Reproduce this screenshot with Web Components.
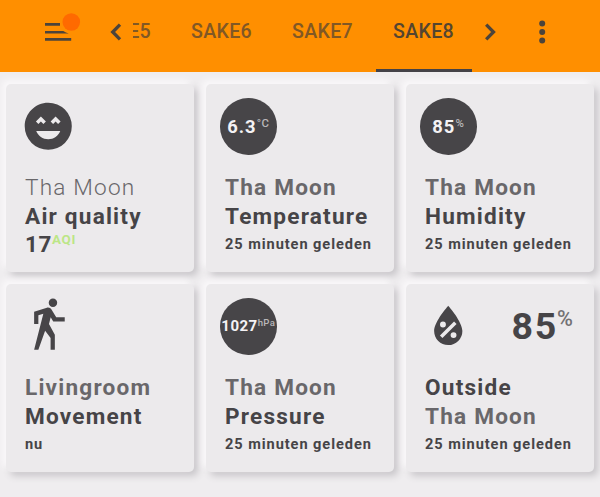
<!DOCTYPE html>
<html lang="nl">
<head>
<meta charset="utf-8">
<title>SAKE8</title>
<style>
html{background:#efedef}
body{margin:0;width:600px;height:497px;overflow:hidden;font-family:Roboto,"Liberation Sans",sans-serif;color:#464447}
</style>
</head>
<body>
<dash-board>
  <app-header slot="header">
    <nav-tab>SAKE5</nav-tab>
    <nav-tab>SAKE6</nav-tab>
    <nav-tab>SAKE7</nav-tab>
    <nav-tab active>SAKE8</nav-tab>
  </app-header>
  <sensor-card>
    <card-icon slot="icon" name="happy"></card-icon>
    <span slot="first" class="thin">Tha Moon</span><span slot="second">Air quality</span>
    <sensor-value slot="state" kind="inline" unit="AQI">17</sensor-value>
  </sensor-card>
  <sensor-card>
    <sensor-value slot="icon" kind="badge" unit="°C">6.3</sensor-value>
    <span slot="first">Tha Moon</span><span slot="second">Temperature</span><span slot="state">25 minuten geleden</span>
  </sensor-card>
  <sensor-card>
    <sensor-value slot="icon" kind="badge" unit="%">85</sensor-value>
    <span slot="first">Tha Moon</span><span slot="second">Humidity</span><span slot="state">25 minuten geleden</span>
  </sensor-card>
  <sensor-card>
    <card-icon slot="icon" name="walk"></card-icon>
    <span slot="first">Livingroom</span><span slot="second">Movement</span><span slot="state">nu</span>
  </sensor-card>
  <sensor-card>
    <sensor-value slot="icon" kind="badge" small unit="hPa">1027</sensor-value>
    <span slot="first">Tha Moon</span><span slot="second">Pressure</span><span slot="state">25 minuten geleden</span>
  </sensor-card>
  <sensor-card swap>
    <card-icon slot="icon" name="drop"></card-icon>
    <sensor-value slot="reading" kind="large" unit="%">85</sensor-value>
    <span slot="first">Outside</span><span slot="second">Tha Moon</span><span slot="state">25 minuten geleden</span>
  </sensor-card>
</dash-board>
<script>
function define(name, html) {
  const template = document.createElement('template');
  template.innerHTML = html;
  customElements.define(name, class extends HTMLElement {
    constructor() {
      super();
      this.attachShadow({mode: 'open'}).append(template.content.cloneNode(true));
    }
  });
}

define('dash-board', `
<style>
:host{display:flex;flex-direction:column;height:497px;background:#efedef}
main{display:grid;grid-template-columns:repeat(3,188px);grid-auto-rows:188px;gap:12px;padding:12px 6px;flex:1}
</style>
<slot name="header"></slot><main><slot></slot></main>`);

define('app-header', `
<style>
:host{display:flex;height:72px;background:#ff8f00;box-sizing:border-box;padding-left:40px;flex:none}
svg{display:block;flex:none}
nav{display:flex;gap:5px;width:339px;padding-right:4px;overflow:hidden;justify-content:flex-end}
</style>
<svg width="93" height="72" viewBox="40 0 93 72">
 <g fill="#4c443b"><path d="M45 23h15v2.7H45zM45 30.9h18.3q2.5 1.8 5.5 2.7H45zM45 38.1h26.2v2.7H45z"/></g>
 <circle cx="71.3" cy="22" r="8.8" fill="#ff6a00"/>
 <path d="M120 24.6L112.7 32l7.3 7.4" fill="none" stroke="#4c443b" stroke-width="3.3"/>
</svg>
<nav><slot></slot></nav>
<svg width="124" height="72" viewBox="476 0 124 72">
 <path d="M486.2 24.6l7.3 7.4-7.3 7.4" fill="none" stroke="#4c443b" stroke-width="3.3"/>
 <g fill="#4c443b"><circle cx="542.2" cy="23.5" r="3"/><circle cx="542.2" cy="32" r="3"/><circle cx="542.2" cy="40.5" r="3"/></g>
</svg>`);

define('nav-tab', `
<style>
:host{display:flex;justify-content:center;flex:none;width:96px;height:72px;box-sizing:border-box;padding:20px 1px 0 0;font:500 19.6px/24px Roboto,sans-serif;letter-spacing:.3px;color:#815825}
:host([active]){color:#544530;border-bottom:3px solid #444247}
</style><slot></slot>`);

define('sensor-card', `
<style>
:host{display:flex;flex-direction:column;box-sizing:border-box;padding:14px 0 0 19px;border-radius:5px;background:#eceaec;box-shadow:-4px -4px 6px #faf8fa,4px 4px 7px #c9c6ca}
.top{display:flex;height:76px;margin-left:-5px;padding-right:21px;justify-content:space-between}
.line,.state{font-size:22.6px;line-height:29px;height:28px;font-weight:700;letter-spacing:1.2px;white-space:nowrap}
.a{color:#69676a;line-height:27px}
.state{font-size:14.6px;letter-spacing:.93px}
:host([swap]) .a{color:#464447}
:host([swap]) .b{color:#69676a}
::slotted(.thin){font-weight:300}
</style>
<div class="top"><slot name="icon"></slot><slot name="reading"></slot></div>
<div class="line a"><slot name="first"></slot></div>
<div class="line b"><slot name="second"></slot></div>
<div class="state"><slot name="state"></slot></div>`);

const icons = {
  happy: 'M12,2C6.47,2 2,6.5 2,12A10,10 0 0,0 12,22A10,10 0 0,0 22,12A10,10 0 0,0 12,2ZM8.88,7.82L11,9.94L9.94,11L8.88,9.94L7.82,11L6.76,9.94ZM12,17.5C9.67,17.5 7.69,16.04 6.89,14H17.11C16.31,16.04 14.33,17.5 12,17.5ZM16.18,11L15.12,9.94L14.06,11L13,9.94L15.12,7.82L17.24,9.94Z',
  walk: 'M14.12,10H19V8.2H15.38L13.38,4.87C13.08,4.37 12.54,4.03 11.92,4.03C11.74,4.03 11.58,4.06 11.42,4.11L6,5.8V11H7.8V7.33L9.91,6.67L6,22H7.8L10.67,13.89L13,17V22H14.8V15.59L12.31,11.05L13.04,8.18ZM14,3.8C15,3.8 15.8,3 15.8,2C15.8,1 15,0.2 14,0.2C13,0.2 12.2,1 12.2,2C12.2,3 13,3.8 14,3.8Z',
  drop: 'M12,3.25C12,3.25 6,10 6,14C6,17.32 8.69,20 12,20A6,6 0 0,0 18,14C18,10 12,3.25 12,3.25ZM14.47,9.97L15.53,11.03L9.53,17.03L8.47,15.97ZM9.75,10A1.25,1.25 0 0,1 9.75,12.5A1.25,1.25 0 0,1 9.75,10ZM14.25,14.5A1.25,1.25 0 0,1 14.25,17A1.25,1.25 0 0,1 14.25,14.5Z'
};
customElements.define('card-icon', class extends HTMLElement {
  constructor() {
    super();
    this.attachShadow({mode: 'open'});
  }
  connectedCallback() {
    this.shadowRoot.innerHTML = `<style>:host{display:block;width:56.5px;height:56.5px}svg{display:block}</style>
      <svg width="56.5" height="56.5" viewBox="0 0 24 24"><path fill="#474548" fill-rule="evenodd" d="${icons[this.getAttribute('name')]}"/></svg>`;
  }
});

customElements.define('sensor-value', class extends HTMLElement {
  constructor() {
    super();
    this.attachShadow({mode: 'open'});
  }
  connectedCallback() {
    this.shadowRoot.innerHTML = `<style>
:host{display:flex;align-items:baseline;font-weight:700;white-space:nowrap}
i{font-style:normal;line-height:0;position:relative}
:host([kind=badge]){width:56.5px;height:56.5px;border-radius:50%;background:#474548;color:#f4f2f4;justify-content:center;font-size:18.4px;line-height:57px;letter-spacing:1px}
:host([kind=badge]) i{font-size:11.4px;font-weight:500;top:-6.5px;letter-spacing:.4px;color:#b9b7b9}
:host([kind=badge][small]){font-size:15px;letter-spacing:.5px}
:host([kind=badge][small]) i{font-size:9.6px;top:-5.5px;letter-spacing:.3px}
:host([kind=inline]){font-size:22.4px;letter-spacing:.7px}
:host([kind=inline]) i{font-size:13.4px;top:-8px;letter-spacing:.6px;color:#bce687}
:host([kind=large]){font-size:37.5px;line-height:57px;letter-spacing:1.8px}
:host([kind=large]) i{font-size:21.6px;top:-13px;font-weight:500;letter-spacing:0;margin-left:-1px;color:#737174}
</style><span><slot></slot></span><i>${this.getAttribute('unit')}</i>`;
  }
});
</script>
</body>
</html>
